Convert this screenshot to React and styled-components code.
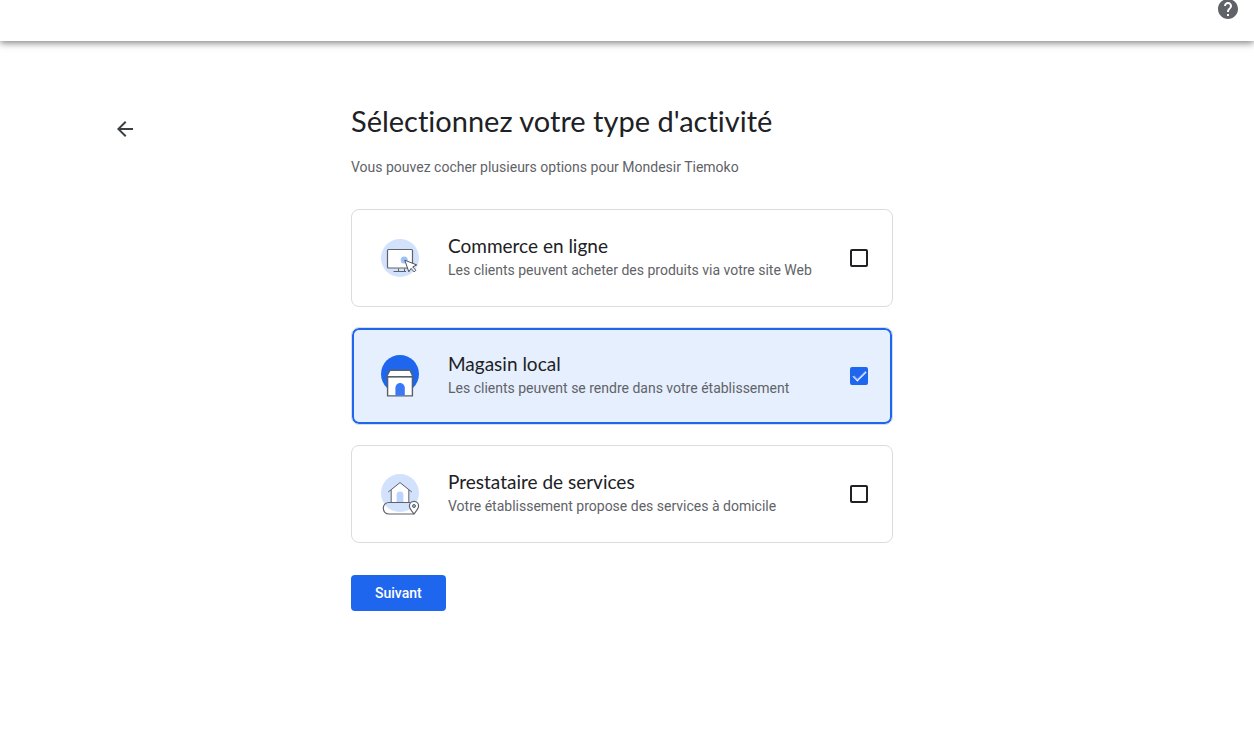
import React, { useState } from 'react';
import styled, { createGlobalStyle } from 'styled-components';

const GlobalStyle = createGlobalStyle`
    *{
        box-sizing: border-box;
    }

    body{
        margin: 0;
        background-color: #ffffff;
        color: #202124;
        font-family: Roboto, sans-serif;
        font-variant-ligatures: none;
    }
`;

const Header = styled.header`
    display: flex;
    justify-content: flex-end;
    align-items: flex-start;
    height: 41px;
    padding-right: 14px;
    box-shadow: 0 2px 7px rgba(0, 0, 0, 0.5);
`;

const IconButton = styled.button`
    display: flex;
    padding: 0;
    border: none;
    background: none;
    color: ${props => props.$color};
    cursor: pointer;

    svg{
        display: block;
        fill: currentColor;
    }
`;

const HelpButton = styled(IconButton)`
    margin-top: -3px;
`;

const Main = styled.main`
    display: grid;
    grid-template-columns: 1fr minmax(0, 542px) 1fr;
    align-items: start;
    padding: 64px 115px 40px 105px;
`;

const BackButton = styled(IconButton)`
    justify-self: start;
    margin-top: 4px;
    padding: 8px;
`;

const Title = styled.h1`
    margin: 0 0 20px;
    font-family: Lato, sans-serif;
    font-size: 29px;
    font-weight: 400;
    line-height: 32px;
`;

const Subtitle = styled.p`
    margin: 0 0 32px;
    color: #5f6368;
    font-size: 14px;
    line-height: 20px;
`;

const Options = styled.div`
    display: flex;
    flex-direction: column;
    gap: 20px;
    margin-bottom: 32px;
`;

const Card = styled.label`
    display: flex;
    align-items: center;
    gap: 18px;
    padding: 18px 24px 18px 18px;
    border: 1px solid #dadce0;
    border-radius: 8px;
    background-color: ${props => (props.$selected ? '#e6effe' : '#ffffff')};
    box-shadow: ${props => (props.$selected ? 'inset 0 0 0 2px #1f66ee' : 'none')};
    cursor: pointer;

    > svg{
        flex: none;
    }
`;

const CardText = styled.span`
    flex: 1;
    display: flex;
    flex-direction: column;
    gap: 4px;
`;

const CardTitle = styled.span`
    font-family: Lato, sans-serif;
    font-size: 19px;
    line-height: 20px;
`;

const CardDescription = styled.span`
    color: #5f6368;
    font-size: 14px;
    line-height: 20px;
`;

const Checkbox = styled.input`
    appearance: none;
    flex: none;
    display: grid;
    place-items: center;
    width: 18px;
    height: 18px;
    margin: 0;
    border: 2px solid #202124;
    border-radius: 2px;
    cursor: pointer;

    &:checked{
        border-color: #1f66ee;
        background-color: #1f66ee;
    }

    &:checked::before{
        content: '';
        width: 12px;
        height: 6px;
        border-left: 1px solid #ffffff;
        border-bottom: 1px solid #ffffff;
        box-shadow: inset 1px -1px 0 rgba(255, 255, 255, 0.5);
        transform: translateY(-2px) rotate(-45deg);
    }
`;

const SubmitButton = styled.button`
    height: 36px;
    padding: 0 24px;
    border: none;
    border-radius: 4px;
    background-color: #1f66ee;
    color: #ffffff;
    font-family: Roboto, sans-serif;
    font-size: 14px;
    font-weight: 500;
    cursor: pointer;
`;

const OnlineIcon = () => (
    <svg width='60' height='60' viewBox='0 0 60 60' aria-hidden='true'>
        <circle cx='30' cy='30' r='19' fill='#d2e2fd' />
        <g fill='#ffffff' stroke='#5f6368'>
            <rect x='17.5' y='21.5' width='25' height='18.5' rx='1' strokeWidth='1.2' />
            <path d='M28.5 40.5v3M34.5 40.5v3M23.5 43.5h12.5' />
        </g>
        <circle cx='34.2' cy='32' r='3.5' fill='#9dc0fb' />
        <path
            d='M34.8 32.2l4 11.6 2.3-3.4 3 3.5 1.8-1.6-3.2-3.4 4-2z'
            fill='#ffffff'
            stroke='#4d5156'
            strokeLinejoin='round'
        />
    </svg>
);

const StoreIcon = () => (
    <svg width='60' height='60' viewBox='0 0 60 60' aria-hidden='true'>
        <circle cx='30' cy='28' r='19' fill='#1f66ee' />
        <g fill='#ffffff' stroke='#56606e' strokeWidth='1.4' strokeLinejoin='round'>
            <path d='M17.6 30.5h24.8v19.4H17.6z' />
            <path d='M20 24.2h20l3 6.6H16.6z' />
        </g>
        <path d='M25.4 49.4v-7.6a4.7 4.7 0 0 1 9.4 0v7.6z' fill='#3b78f5' />
    </svg>
);

const ServiceIcon = () => (
    <svg width='60' height='60' viewBox='0 0 60 60' aria-hidden='true'>
        <circle cx='30' cy='29' r='19' fill='#d2e2fd' />
        <path d='M21 38.2V26.4l9-7.6 9 7.6v11.8z' fill='#ffffff' />
        <path d='M26.6 38v-7a3.4 3.4 0 0 1 6.8 0v7z' fill='#bdd4fb' />
        <g fill='none' stroke='#5f6368'>
            <path d='M18.2 28L30 18.6 41.8 28M21.2 26v12.3M38.8 26v12.3' />
            <path d='M40 38.5H19c-3.4 0-5.7 2.6-5.7 5.4 0 3.4 2.3 6.1 5.7 6.1h25' strokeWidth='1.2' />
            <path
                d='M44 50c-2.5-3.2-4.6-5.5-4.6-8a4.6 4.6 0 0 1 9.2 0c0 2.5-2.1 4.8-4.6 8z'
                fill='#ffffff'
                strokeWidth='1.2'
            />
            <circle cx='44' cy='42' r='1.5' fill='#8ab4f8' />
        </g>
    </svg>
);

const activityTypes = [
    {
        id: 'online',
        title: 'Commerce en ligne',
        description: 'Les clients peuvent acheter des produits via votre site Web',
        Icon: OnlineIcon,
    },
    {
        id: 'store',
        title: 'Magasin local',
        description: 'Les clients peuvent se rendre dans votre établissement',
        Icon: StoreIcon,
    },
    {
        id: 'service',
        title: 'Prestataire de services',
        description: 'Votre établissement propose des services à domicile',
        Icon: ServiceIcon,
    },
];

const App = () => {
    const [selected, setSelected] = useState(['store']);

    const toggle = id => {
        setSelected(
            selected.includes(id) ? selected.filter(item => item !== id) : [...selected, id]
        );
    };

    return (
        <>
            <GlobalStyle />
            <Header>
                <HelpButton type='button' aria-label='Aide' $color='#5f6368'>
                    <svg width='24' height='24' viewBox='0 0 24 24'>
                        <path d='M12 2C6.48 2 2 6.48 2 12s4.48 10 10 10 10-4.48 10-10S17.52 2 12 2zm1 17h-2v-2h2v2zm2.07-7.75l-.9.92C13.45 12.9 13 13.5 13 15h-2v-.5c0-1.1.45-2.1 1.17-2.83l1.24-1.26c.37-.36.59-.86.59-1.41 0-1.1-.9-2-2-2s-2 .9-2 2H8c0-2.21 1.79-4 4-4s4 1.79 4 4c0 .88-.36 1.68-.93 2.25z' />
                    </svg>
                </HelpButton>
            </Header>
            <Main>
                <BackButton type='button' aria-label='Retour' $color='#3c4043'>
                    <svg width='24' height='24' viewBox='0 0 24 24'>
                        <path d='M20 11H7.83l5.59-5.59L12 4l-8 8 8 8 1.41-1.41L7.83 13H20v-2z' />
                    </svg>
                </BackButton>
                <form onSubmit={e => e.preventDefault()}>
                    <Title>Sélectionnez votre type d'activité</Title>
                    <Subtitle>Vous pouvez cocher plusieurs options pour Mondesir Tiemoko</Subtitle>
                    <Options>
                        {activityTypes.map(({ id, title, description, Icon }) => (
                            <Card key={id} htmlFor={id} $selected={selected.includes(id)}>
                                <Icon />
                                <CardText>
                                    <CardTitle>{title}</CardTitle>
                                    <CardDescription>{description}</CardDescription>
                                </CardText>
                                <Checkbox
                                    type='checkbox'
                                    id={id}
                                    checked={selected.includes(id)}
                                    onChange={() => toggle(id)}
                                />
                            </Card>
                        ))}
                    </Options>
                    <SubmitButton type='submit'>Suivant</SubmitButton>
                </form>
            </Main>
        </>
    );
};

export default App;
